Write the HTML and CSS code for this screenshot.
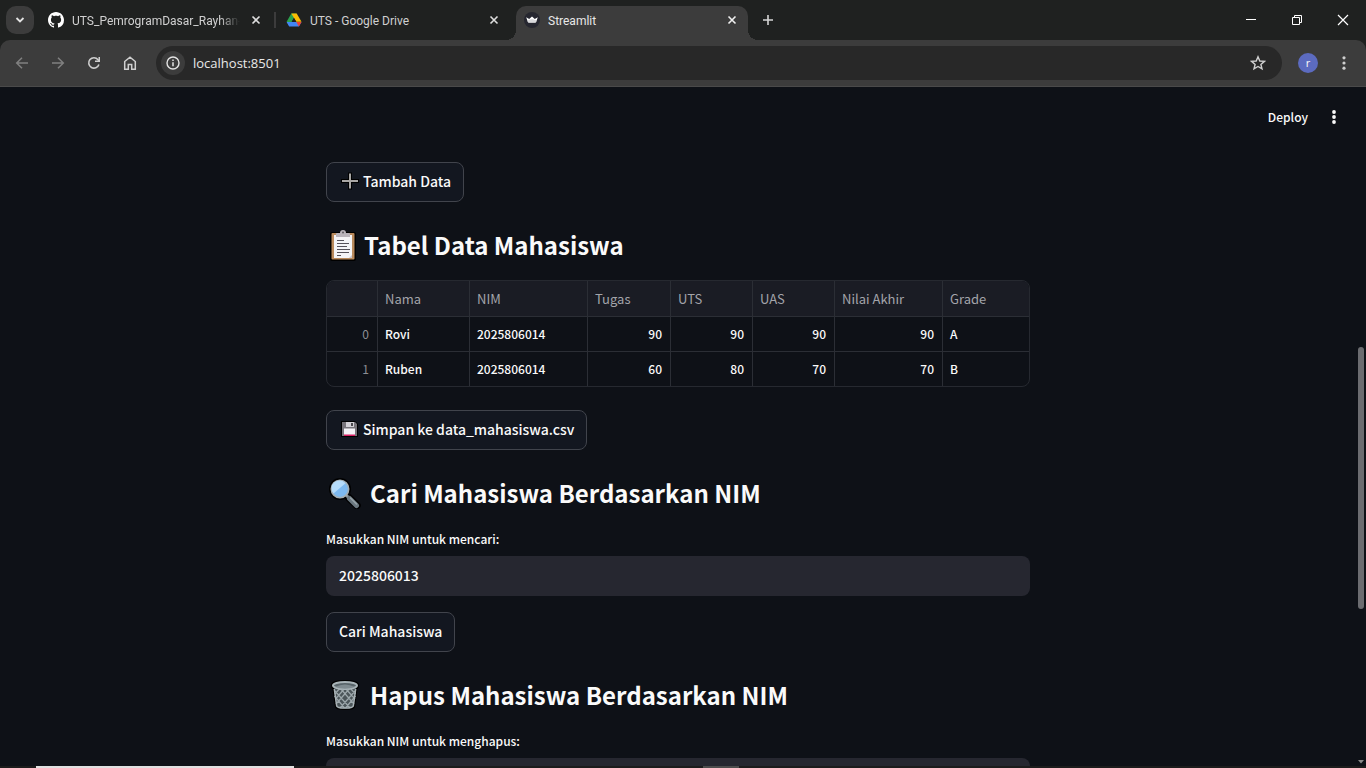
FILE: index.html
```html
<!DOCTYPE html>
<html lang="id">
<head>
<meta charset="utf-8">
<title>Streamlit</title>
<link rel="stylesheet" href="styles.css">
</head>
<body>
<div class="browser">
  <div class="tabstrip">
    <button class="tab-search" aria-label="Cari tab"><svg width="12" height="12" viewBox="0 0 12 12"><path d="M2.500 4l3.500 3.500L9.500 4" fill="none" stroke="#e3e3e3" stroke-width="1.800"/></svg></button>
    <div class="tabs">
      <div class="tab">
        <svg class="favicon" viewBox="0 0 16 16"><path fill="#fff" fill-rule="evenodd" d="M8 0C3.580 0 0 3.580 0 8c0 3.540 2.290 6.530 5.470 7.590.4.070.55-.17.55-.38 0-.19-.01-.82-.01-1.490-2.010.37-2.530-.49-2.690-.94-.09-.23-.48-.94-.82-1.130-.28-.15-.68-.52-.01-.53.63-.01 1.080.58 1.230.82.72 1.210 1.870.87 2.330.66.070-.52.28-.87.510-1.070-1.780-.2-3.640-.89-3.640-3.950 0-.87.310-1.590.82-2.150-.08-.2-.36-1.020.08-2.120 0 0 .67-.21 2.200.82.640-.18 1.320-.27 2-.27s1.360.09 2 .27c1.530-1.040 2.200-.82 2.200-.82.440 1.100.16 1.920.08 2.120.510.560.820 1.270.820 2.150 0 3.070-1.870 3.750-3.650 3.950.290.250.540.730.540 1.480 0 1.070-.01 1.930-.01 2.200 0 .210.150.460.550.380A8.010 8.010 0 0 0 16 8c0-4.420-3.580-8-8-8z"/></svg>
        <span class="tab-title fade">UTS_PemrogramDasar_Rayhan-</span>
        <button class="tab-close" aria-label="Tutup tab"><svg width="10" height="10" viewBox="0 0 10 10"><path d="M1.500 1.500l7 7M8.500 1.500l-7 7" stroke="#dedede" stroke-width="1.600"/></svg></button>
      </div>
      <span class="tab-sep"></span>
      <div class="tab">
        <svg class="favicon" viewBox="0 0 16 16"><path fill="#2ba24c" d="M5.300 1.500h5.200L7.900 6 3.300 14 .6 9.700z"/><path fill="#fbbc04" d="M5.300 1.500h5.400l4.800 8.300h-5.200z"/><path fill="#4285f4" d="M3.200 14.500L.6 9.900h14.900l-2.600 4.600z"/><path fill="#ea4335" d="M10.300 9.900h5.200l-2.600 4.600z"/><path fill="#1f2120" d="M8 6.100l2.200 3.700H5.800z"/></svg>
        <span class="tab-title">UTS - Google Drive</span>
        <button class="tab-close" aria-label="Tutup tab"><svg width="10" height="10" viewBox="0 0 10 10"><path d="M1.500 1.500l7 7M8.500 1.500l-7 7" stroke="#dedede" stroke-width="1.600"/></svg></button>
      </div>
      <span class="tab-gap"></span>
      <div class="tab active">
        <svg class="favicon" viewBox="0 0 16 16"><circle cx="8" cy="8" r="8" fill="#262730"/><path fill="#fff" d="M2.200 5.200l3 1.800L8 4.600 10.800 7l3-1.800-1.500 4.600q-.3 1-1.300 1H5q-1 0-1.300-1z"/><path fill="#b5b5ba" d="M3.300 8.400L8 7l4.700 1.400-.5 1.600q-.2.800-1.200.8H5q-1 0-1.200-.8z" opacity=".5"/></svg>
        <span class="tab-title">Streamlit</span>
        <button class="tab-close" aria-label="Tutup tab"><svg width="10" height="10" viewBox="0 0 10 10"><path d="M1.500 1.500l7 7M8.500 1.500l-7 7" stroke="#f0f0f0" stroke-width="1.600"/></svg></button>
      </div>
    </div>
    <button class="new-tab" aria-label="Tab baru"><svg width="12" height="12" viewBox="0 0 12 12"><path d="M6 1v10M1 6h10" stroke="#d5d5d5" stroke-width="1.600"/></svg></button>
    <div class="window-controls">
      <button aria-label="Minimalkan"><svg width="12" height="12" viewBox="0 0 12 12"><path d="M1 5.500h10" stroke="#fff"/></svg></button>
      <button aria-label="Pulihkan"><svg width="12" height="12" viewBox="0 0 12 12"><path d="M1.500 3.500h7v7h-7zM3.500 3.500v-2h7v7h-2" fill="none" stroke="#fff"/></svg></button>
      <button aria-label="Tutup"><svg width="12" height="12" viewBox="0 0 12 12"><path d="M1 1l10 10M11 1L1 11" stroke="#fff" stroke-width="1.200"/></svg></button>
    </div>
  </div>

  <div class="toolbar">
    <button class="tool" aria-label="Kembali"><svg width="16" height="16" viewBox="0 0 16 16"><path d="M14 8H3M8 2.700L2.700 8 8 13.300" fill="none" stroke="#808080" stroke-width="1.500"/></svg></button>
    <button class="tool" aria-label="Maju"><svg width="16" height="16" viewBox="0 0 16 16"><path d="M2 8h11M8 2.700L13.300 8 8 13.300" fill="none" stroke="#808080" stroke-width="1.500"/></svg></button>
    <button class="tool" aria-label="Muat ulang"><svg width="16" height="16" viewBox="0 0 16 16"><path d="M12.900 9.500A5.200 5.200 0 1 1 12 4.700L13.300 6" fill="none" stroke="#cfcfcf" stroke-width="1.600"/><path d="M14 2v5H9V5.500h3.500V2z" fill="#cfcfcf"/></svg></button>
    <button class="tool" aria-label="Beranda"><svg width="16" height="16" viewBox="0 0 16 16"><path d="M2.700 6.500L8 2.200l5.300 4.300v7.700H9.700V9.500H6.300v4.700H2.700z" fill="none" stroke="#cfcfcf" stroke-width="1.500"/></svg></button>
    <div class="omnibox">
      <button class="site-info" aria-label="Info situs"><svg width="16" height="16" viewBox="0 0 16 16"><circle cx="8" cy="8" r="6" fill="none" stroke="#e3e3e3" stroke-width="1.400"/><path d="M8 7.300v4M8 4.500v1.500" stroke="#e3e3e3" stroke-width="1.500"/></svg></button>
      <input class="address" type="text" aria-label="Alamat" value="localhost:8501">
      <button class="star" aria-label="Bookmark"><svg width="16" height="16" viewBox="0 0 16 16"><path d="M8 1.800l1.800 4.200 4.600.4-3.500 3 1.100 4.500L8 11.500l-4 2.400 1.100-4.500-3.500-3L6.200 6z" fill="none" stroke="#d0d0d0" stroke-width="1.400"/></svg></button>
    </div>
    <button class="tool" aria-label="Profil"><span class="avatar">r</span></button>
    <button class="tool" aria-label="Menu"><svg width="16" height="16" viewBox="0 0 16 16" fill="#cfcfcf"><circle cx="8" cy="2.800" r="1.600"/><circle cx="8" cy="8" r="1.600"/><circle cx="8" cy="13.200" r="1.600"/></svg></button>
  </div>

  <div class="viewport">
    <div class="page">
      <header class="app-header">
        <button class="deploy">Deploy</button>
        <button class="app-menu" aria-label="Menu utama"><svg width="16" height="16" viewBox="0 0 16 16" fill="#fafafa"><circle cx="8" cy="3" r="1.900"/><circle cx="8" cy="8" r="1.900"/><circle cx="8" cy="13" r="1.900"/></svg></button>
      </header>
      <main class="content">
        <button class="btn"><svg width="20" height="20" viewBox="0 0 20 20"><path d="M11 1.500v17M2 10h18" stroke="#000" stroke-width="4"/><path d="M11 2.500v15M3 10h16" stroke="#a9a7a5" stroke-width="2"/></svg>Tambah Data</button>

        <h3 class="heading"><svg width="32" height="32" viewBox="0 0 32 32"><rect x="4" y="3" width="26" height="29" rx="2" fill="#000"/><rect x="5.500" y="4" width="23" height="26.500" rx="1" fill="#b98a5c"/><path d="M8 6h18v23H8z" fill="#f4f4f7"/><path d="M26 26v3h-3z" fill="#c9c6cc"/><path d="M10 8V5q0-1 1-1h3q0-3 3-3t3 3h3q1 0 1 1v3z" fill="#b9b4bb"/><circle cx="17" cy="3.500" r="1" fill="#5d5a60"/><path d="M11 11.500h7M11 14.500h12M11 17.500h10M11 20.500h13M11 23.500h12M11 26.500h4" stroke="#55525a" stroke-width="1"/></svg>Tabel Data Mahasiswa</h3>

        <div class="table-frame">
          <table class="data">
            <colgroup><col class="c-index"><col class="c-name"><col class="c-nim"><col class="c-task"><col class="c-score"><col class="c-score"><col class="c-final"><col></colgroup>
            <thead><tr><th aria-label="Indeks"></th><th>Nama</th><th>NIM</th><th>Tugas</th><th>UTS</th><th>UAS</th><th>Nilai Akhir</th><th>Grade</th></tr></thead>
            <tbody>
              <tr><td class="idx">0</td><td>Rovi</td><td>2025806014</td><td class="num">90</td><td class="num">90</td><td class="num">90</td><td class="num">90</td><td>A</td></tr>
              <tr><td class="idx">1</td><td>Ruben</td><td>2025806014</td><td class="num">60</td><td class="num">80</td><td class="num">70</td><td class="num">70</td><td>B</td></tr>
            </tbody>
          </table>
        </div>

        <button class="btn"><svg width="20" height="20" viewBox="0 0 20 20"><path d="M2 2h14l3 3v13H2z" fill="#000"/><path d="M3 3h13l2 2v12H3z" fill="#77747a"/><path d="M7 3h8v5H7z" fill="#d2d0d5"/><path d="M12 4h2v3h-2z" fill="#4a484d"/><path d="M5 9.500h11V17H5z" fill="#f5f3f7"/><path d="M5 15.500h11V17H5z" fill="#d91e63"/></svg>Simpan ke data_mahasiswa.csv</button>

        <h3 class="heading"><svg width="38" height="32" viewBox="0 0 38 32"><path d="M20.500 18.500L31 28.500" stroke="#000" stroke-width="7.500" stroke-linecap="round"/><circle cx="14" cy="12" r="11" fill="#000"/><path d="M20 18l3 3" stroke="#8f999e" stroke-width="3"/><path d="M23.500 21.500l7 7" stroke="#6b7880" stroke-width="5" stroke-linecap="round"/><path d="M24.500 21l6 6" stroke="#98a4a9" stroke-width="1.500" stroke-linecap="round"/><circle cx="14" cy="12" r="8.700" fill="#7db9ef" stroke="#a5afb3" stroke-width="1.600"/><path d="M7.500 16.500A7.900 7.900 0 0 1 19.500 6.200z" fill="#b5dcfa"/></svg>Cari Mahasiswa Berdasarkan NIM</h3>

        <div class="field">
          <label for="cari">Masukkan NIM untuk mencari:</label>
          <input id="cari" type="text" value="2025806013">
        </div>

        <button class="btn">Cari Mahasiswa</button>

        <h3 class="heading"><svg width="38" height="32" viewBox="0 0 38 32"><path d="M5 6q0-5 14-5t14 5q0 3-1.500 4L29 28q-.5 3-10 3T9 28L6.500 10Q5 9 5 6z" fill="#000"/><path d="M8 8h22l-2.300 19q-.5 2.500-8.700 2.500T10.300 27z" fill="#4b5559"/><path d="M9 12l15 17M8.500 17l10 12M14 9l14 16M19 9l10 11M24 9l5.500 6M29 12L14 29M29.500 17l-10 12M24 9L10 25M19 9L9.500 20M14 9l-5 6" stroke="#9ca7ab" stroke-width="1.200"/><path d="M8.300 10l2.400 17q.6 2 8.300 2t8.300-2l2.400-17" fill="none" stroke="#a7b1b5" stroke-width="1.500"/><ellipse cx="19" cy="6.500" rx="12" ry="3.500" fill="#59656a" stroke="#a9b4b8" stroke-width="2"/><path d="M9 8q10-5 20 0-10 3.500-20 0z" fill="#7f8b90"/></svg>Hapus Mahasiswa Berdasarkan NIM</h3>

        <div class="field">
          <label for="hapus">Masukkan NIM untuk menghapus:</label>
          <input id="hapus" type="text">
        </div>
      </main>
    </div>
    <div class="scrollbar" aria-hidden="true">
      <span class="track-before"></span><span class="thumb"></span><span class="track-after"></span>
      <svg width="8" height="4" viewBox="0 0 8 4"><path d="M1 0h6L4 3.500z" fill="#8a8a8a"/></svg>
    </div>
  </div>
  <div class="taskbar"><span class="task-search"></span><span class="task-open"></span></div>
</div>
</body>
</html>
```

FILE: styles.css
```css
* { box-sizing: border-box; }

body {
  margin: 0;
  background: #0e1117;
  color: #fafafa;
  font-family: "Noto Sans CJK JP", "Noto Sans", sans-serif;
}

button {
  margin: 0;
  padding: 0;
  border: 0;
  background: none;
  color: inherit;
  font: inherit;
  display: flex;
  align-items: center;
  justify-content: center;
}

svg { flex: none; display: block; }

.browser {
  height: 100vh;
  display: flex;
  flex-direction: column;
  overflow: hidden;
  background: #1f2120;
}

/* Tab strip */
.tabstrip {
  flex: none;
  display: flex;
  align-items: center;
  height: 40px;
  padding-left: 6px;
  font: 12px Roboto, "Open Sans", sans-serif;
  color: #d0d0d0;
}
.tab-search {
  flex: none;
  width: 28px;
  height: 28px;
  margin-right: 6px;
  border-radius: 10px;
  background: #3c3c3c;
}
.tabs { display: flex; align-items: center; align-self: stretch; }
.tab {
  display: flex;
  align-items: center;
  gap: 8px;
  width: 232px;
  height: 34px;
  padding: 0 8px 6px;
  align-self: flex-end;
}
.tab.active {
  position: relative;
  background: #3c3c3c;
  border-radius: 10px 10px 0 0;
  color: #e8e8e8;
}
.tab.active::before,
.tab.active::after {
  content: "";
  position: absolute;
  bottom: 0;
  width: 10px;
  height: 10px;
}
.tab.active::before { right: 100%; background: radial-gradient(circle at 0 0, transparent 10px, #3c3c3c 10px); }
.tab.active::after { left: 100%; background: radial-gradient(circle at 100% 0, transparent 10px, #3c3c3c 10px); }
.favicon { width: 16px; height: 16px; }
.tab-title { flex: 1; overflow: hidden; white-space: nowrap; line-height: 18px; padding-top: 2px; }
.fade {
  -webkit-mask-image: linear-gradient(to left, transparent, #000 20px);
  mask-image: linear-gradient(to left, transparent, #000 20px);
}
.tab-close { flex: none; width: 16px; height: 16px; }
.tab-sep { width: 2px; height: 16px; margin: 0 2px; background: #3c3c3c; }
.tab-gap { width: 6px; }
.new-tab { width: 28px; height: 28px; margin-left: 6px; }
.window-controls { display: flex; margin-left: auto; align-self: stretch; }
.window-controls button { width: 46px; }

/* Toolbar */
.toolbar {
  flex: none;
  display: flex;
  align-items: center;
  height: 47px;
  padding: 0 4px;
  background: #3c3c3c;
  border-bottom: 1px solid #4a4a4a;
  border-radius: 10px 10px 0 0;
}
.tool { flex: none; width: 36px; height: 34px; }
.omnibox {
  flex: 1;
  display: flex;
  align-items: center;
  gap: 8px;
  height: 34px;
  margin: 0 8px;
  padding: 0 12px 0 5px;
  border-radius: 17px;
  background: #282828;
}
.site-info { width: 24px; height: 24px; border-radius: 12px; background: #3c3c3c; }
.address {
  flex: 1;
  min-width: 0;
  padding: 0;
  border: 0;
  outline: 0;
  background: none;
  color: #e8e8e8;
  font: 13px "Open Sans", "Noto Sans", sans-serif;
}
.star { width: 24px; height: 24px; }
.avatar {
  width: 20px;
  height: 20px;
  border-radius: 10px;
  background: #5c6bc0;
  font: 11px/19px "Open Sans", sans-serif;
  text-align: center;
}

/* Page area */
.viewport { flex: 1; min-height: 0; display: flex; background: #0e1117; }
.page { flex: 1; min-width: 0; overflow: hidden; }
.app-header {
  display: flex;
  align-items: center;
  justify-content: flex-end;
  gap: 18px;
  height: 60px;
  padding-right: 14px;
  font-size: 12px;
  font-weight: 500;
}
.deploy { padding-bottom: 2px; }
.app-menu { width: 16px; height: 16px; }
.content {
  display: flex;
  flex-direction: column;
  align-items: flex-start;
  gap: 16px;
  max-width: 736px;
  margin: 0 auto;
  padding: 15px 16px 64px;
}
.btn {
  gap: 4px;
  height: 40px;
  padding: 0 12px 2px;
  border: 1px solid #41444c;
  border-radius: 8px;
  background: #131720;
  font-size: 14px;
  font-weight: 500;
  white-space: nowrap;
}
.heading {
  display: flex;
  align-items: center;
  gap: 6px;
  margin: 0;
  padding: 10px 0 2px;
  font-size: 24px;
  line-height: 34px;
  font-weight: 700;
}

.table-frame {
  width: 100%;
  margin-bottom: 7px;
  overflow: hidden;
  border: 1px solid #262930;
  border-radius: 8px;
}
.data {
  width: 100%;
  table-layout: fixed;
  border-collapse: separate;
  border-spacing: 0;
  font-size: 12px;
}
.c-index { width: 51px; }
.c-name { width: 92px; }
.c-nim { width: 118px; }
.c-task { width: 83px; }
.c-score { width: 82px; }
.c-final { width: 108px; }
.data th,
.data td {
  height: 35px;
  padding: 0 8px 0 7px;
  border-right: 1px solid #2b2e35;
  border-bottom: 1px solid #2b2e35;
  line-height: 20px;
  text-align: left;
  font-weight: 500;
}
.data th { height: 36px; background: #1a1c24; color: #a3a4aa; font-size: 13px; font-weight: 400; }
.data th:last-child,
.data td:last-child { border-right: 0; }
.data tbody tr:last-child td { height: 34px; border-bottom: 0; }
.data .num { text-align: right; }
.data .idx { text-align: right; color: #8d8e94; font-weight: 400; }

.field { width: 100%; display: flex; flex-direction: column; }
.field label { margin-bottom: 6px; font-size: 12px; line-height: 22px; font-weight: 500; }
.field input {
  width: 100%;
  height: 40px;
  padding: 0 13px 2px;
  border: 0;
  border-radius: 8px;
  outline: 0;
  background: #262730;
  color: #fafafa;
  font: 500 14px "Noto Sans CJK JP", sans-serif;
}

/* Scrollbar */
.scrollbar {
  flex: none;
  width: 10px;
  display: flex;
  flex-direction: column;
  align-items: center;
  padding-bottom: 2px;
}
.track-before { flex: 260; }
.thumb { flex: 262; width: 6px; border-radius: 3px; background: #6b6c70; }
.track-after { flex: 151; }

/* Taskbar edge */
.taskbar { flex: none; display: flex; height: 2px; padding-left: 36px; background: #1c1c1c; }
.task-search { width: 258px; background: #e0e0e0; }
.task-open { width: 36px; margin-left: 409px; background: #4d4d4d; }
```
